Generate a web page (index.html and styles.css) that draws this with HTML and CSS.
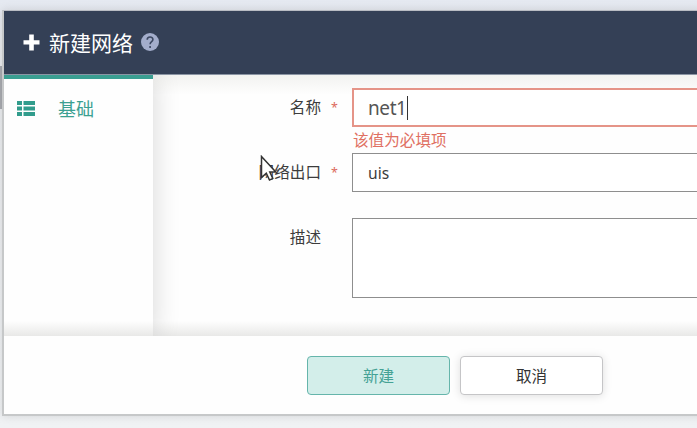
FILE: index.html
```
<!DOCTYPE html>
<html lang="zh-CN">
<head>
<meta charset="utf-8">
<title>新建网络</title>
<link rel="stylesheet" href="styles.css">
</head>
<body>
<div class="page">
  <div class="backdrop-strip"></div>
  <section class="dialog">
    <header class="dialog-header">
      <svg class="plus" viewBox="0 0 17 17"><path d="M6.2.5h4.6v5.7h5.7v4.3h-5.7v6H6.2v-6H.5V6.2h5.7z"/></svg>
      <h1>新建网络</h1>
      <svg class="help" viewBox="0 0 18 18"><circle cx="9" cy="9" r="9"/><path d="M6.2 6.8c0-3.7 5.7-3.7 5.7-.4 0 2.2-2.8 2.2-2.8 4.8"/><path d="M9.1 12.9v2"/></svg>
    </header>
    <div class="dialog-body">
      <nav class="tabs">
        <div class="tab">
          <svg class="list" viewBox="0 0 18 15"><path d="M0 0h5v4H0zM6.5 0H18v4H6.5zM0 5.5h5v4H0zM6.5 5.5H18v4H6.5zM0 11h5v4H0zM6.5 11H18v4H6.5z"/></svg>
          <span>基础</span>
        </div>
      </nav>
      <form class="form">
        <div class="row row-name">
          <label>名称</label><i class="star">*</i>
          <div class="field">
            <div class="control invalid">net1<span class="caret"></span></div>
            <div class="error">该值为必填项</div>
          </div>
        </div>
        <div class="row row-exit">
          <label>网络出口</label><i class="star">*</i>
          <div class="field"><div class="control">uis</div></div>
        </div>
        <div class="row">
          <label>描述</label><i class="star"></i>
          <div class="field"><div class="control area"></div></div>
        </div>
      </form>
    </div>
    <footer class="dialog-footer">
      <button class="btn primary">新建</button>
      <button class="btn">取消</button>
    </footer>
  </section>
  <svg class="pointer" viewBox="0 0 18 27"><path d="M1.5 1.5v21l4.8-4.2 3.2 6.8 3.3-1.6-3-6.5h6z"/></svg>
</div>
</body>
</html>
```
FILE: styles.css
```
* { box-sizing: border-box; }
body {
  margin: 0;
  width: 697px;
  height: 428px;
  overflow: hidden;
  background: #eceef1;
  color: #3c3c3c;
  font: 15.6px/20px "Noto Sans", "Noto Sans CJK SC", sans-serif;
}
.page {
  position: relative;
  height: 428px;
  padding: 10px 0 0 2px;
  overflow: hidden;
  background: linear-gradient(#e5e9f1 0, #e9ebee 40px, #f0f2f4 428px);
}
.backdrop-strip {
  position: absolute;
  left: 0;
  top: 66px;
  width: 4px;
  height: 43px;
  background: #a9abb0;
}
.dialog {
  position: relative;
  display: flex;
  flex-direction: column;
  width: 720px;
  height: 406px;
  border: 2px solid #c6c8c9;
  border-top: 1px solid #b9bcc3;
  background: #fefefe;
  box-shadow: 0 0 9px rgba(0, 0, 0, .12);
}
.dialog-header {
  display: flex;
  align-items: center;
  flex: 0 0 64px;
  padding-left: 19px;
  background: #344056;
  border-bottom: 1px solid #8b95a4;
  color: #fff;
}
.plus { width: 17px; height: 17px; fill: #fff; }
h1 {
  margin: 0 8px 0 9px;
  font-size: 21px;
  font-weight: 400;
  line-height: 28px;
}
.help { width: 18px; height: 18px; fill: #a3adcb; margin-top: -2px; }
.help path { fill: none; stroke: #3c4861; stroke-width: 1.6; }
.dialog-body {
  position: relative;
  display: flex;
  flex: 0 0 261px;
  overflow: hidden;
}
.dialog-body::after {
  content: "";
  position: absolute;
  inset: auto 0 0;
  height: 15px;
  background: linear-gradient(rgba(0, 0, 0, 0), rgba(40, 40, 30, .1));
}
.tabs {
  flex: 0 0 149px;
  border-top: 4px solid #3a9e91;
  background: #fefefe;
  box-shadow: 0 0 26px rgba(0, 0, 0, .16);
}
.tab {
  display: flex;
  align-items: center;
  height: 59px;
  padding-left: 13px;
  gap: 23px;
  color: #3ba091;
  font-size: 18px;
}
.list { width: 18px; height: 15px; fill: #319c8c; }
.form {
  flex: 1;
  padding-top: 13px;
  background: linear-gradient(rgba(90, 90, 60, .07), rgba(0, 0, 0, 0) 20px);
}
.row { display: flex; align-items: flex-start; }
.row-name { height: 65px; }
.row-exit { height: 65px; }
label {
  width: 168px;
  padding-top: 9px;
  text-align: right;
}
.star {
  width: 31px;
  padding: 10px 0 0 10px;
  color: #dc6a5c;
  font-size: 12.5px;
  font-style: normal;
}
.field { flex: 1; }
.control {
  display: flex;
  align-items: center;
  height: 39px;
  padding-left: 15px;
  border: 1px solid #8e8e8e;
  background: #fff;
}
.invalid {
  height: 39px;
  padding-left: 14px;
  border: 2px solid #e59488;
  color: #555;
  font-size: 19px;
  letter-spacing: -.4px;
}
.caret { width: 1px; height: 24px; background: #333; }
.error {
  padding: 3px 0 0 1px;
  color: #e07062;
}
.area { height: 80px; }
.dialog-footer {
  display: flex;
  flex: 1;
  gap: 10px;
  padding: 20px 0 0 303px;
  background: #fefefe;
}
.btn {
  width: 143px;
  height: 39px;
  padding: 1px 0 0;
  border: 1px solid #c5c5c7;
  border-radius: 4px;
  background: #fff;
  box-shadow: 0 1px 10px rgba(0, 0, 0, .13);
  color: #333;
  font: inherit;
}
.primary {
  border: 1.5px solid #65b5ab;
  background: #d3eeea;
  box-shadow: none;
  color: #45a295;
}
.pointer {
  position: absolute;
  left: 260px;
  top: 155px;
  width: 18px;
  height: 27px;
  fill: #fff;
  stroke: #333;
  stroke-width: 1.5;
}
```
